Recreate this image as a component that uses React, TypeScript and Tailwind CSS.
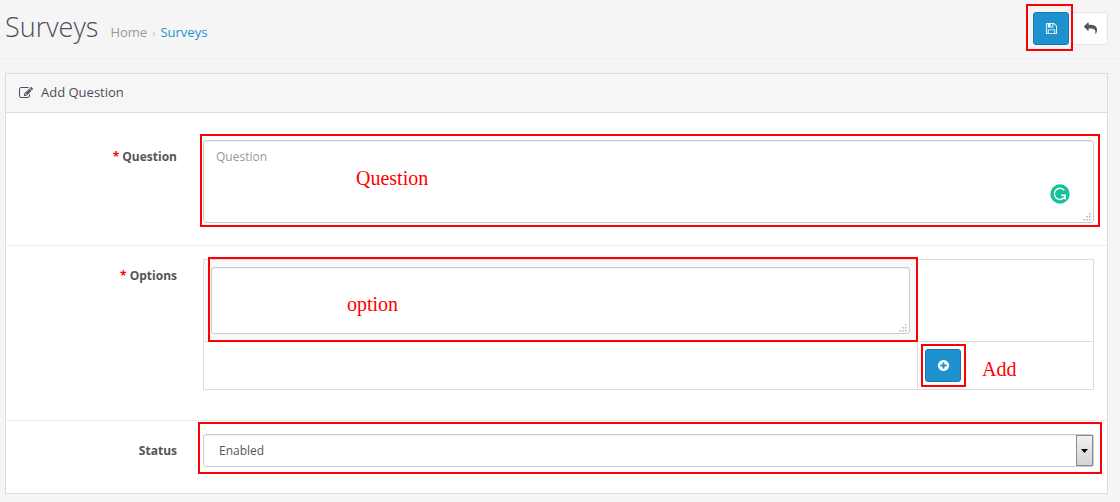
import { useState } from "react";

const icons = {
  edit: "M888 1184l116-116-152-152-116 116v56h96v96h56zm440-720q-16-16-33 1l-350 350q-17 17-1 33t33-1l350-350q17-17 1-33zm80 594v190q0 119-84.5 203.5t-203.5 84.5h-832q-119 0-203.5-84.5t-84.5-203.5v-832q0-119 84.5-203.5t203.5-84.5h832q63 0 117 25 15 7 18 23 3 17-9 29l-49 49q-14 14-32 8-23-6-45-6h-832q-66 0-113 47t-47 113v832q0 66 47 113t113 47h832q66 0 113-47t47-113v-126q0-13 9-22l64-64q15-15 35-7t20 29zm-96-738l288 288-672 672h-288v-288zm444 132l-92 92-288-288 92-92q28-28 68-28t68 28l152 152q28 28 28 68t-28 68z",
  save: "M512 1536h768v-384h-768v384zm896 0h128v-896q0-14-10-38.5t-20-34.5l-281-281q-10-10-34-20t-39-10v416q0 40-28 68t-68 28h-576q-40 0-68-28t-28-68v-416h-128v1280h128v-416q0-40 28-68t68-28h832q40 0 68 28t28 68v416zm-384-928v-320q0-13-9.5-22.5t-22.5-9.5h-192q-13 0-22.5 9.5t-9.5 22.5v320q0 13 9.5 22.5t22.5 9.5h192q13 0 22.5-9.5t9.5-22.5zm640 32v928q0 40-28 68t-68 28h-1344q-40 0-68-28t-28-68v-1344q0-40 28-68t68-28h928q40 0 88 20t76 48l280 280q28 28 48 76t20 88z",
  reply: "M1792 1120q0 166-127 451-3 7-10.5 24t-13.5 30-13 22q-12 17-28 17-15 0-23.5-10t-8.5-25q0-9 2.5-26.5t2.5-23.5q5-68 5-123 0-101-17.5-181t-48.5-138.5-80-101-105.5-69.5-133-42.5-154-21.5-175.5-6h-224v256q0 26-19 45t-45 19-45-19l-512-512q-19-19-19-45t19-45l512-512q19-19 45-19t45 19 19 45v256h224q713 0 875 403 53 134 53 333z",
  plus: "M1344 960v-128q0-26-19-45t-45-19h-256v-256q0-26-19-45t-45-19h-128q-26 0-45 19t-19 45v256h-256q-26 0-45 19t-19 45v128q0 26 19 45t45 19h256v256q0 26 19 45t45 19h128q26 0 45-19t19-45v-256h256q26 0 45-19t19-45zm320-64q0 209-103 385.5t-279.5 279.5-385.5 103-385.5-103-279.5-279.5-103-385.5 103-385.5 279.5-279.5 385.5-103 385.5 103 279.5 279.5 103 385.5z",
};

function Icon({ name, className }: { name: keyof typeof icons; className: string }) {
  return (
    <svg viewBox="0 0 1792 1792" fill="currentColor" className={className} aria-hidden="true">
      <path d={icons[name]} />
    </svg>
  );
}

// Red outline drawn over a control
function Outline({ className }: { className: string }) {
  return <div className={`pointer-events-none absolute border-2 border-[#ff0000] ${className}`} />;
}

function Note({ text, className }: { text: string; className: string }) {
  return (
    <span
      className={`pointer-events-none absolute font-['Liberation_Serif',serif] text-[20px] leading-6 text-[#ff0000] ${className}`}
    >
      {text}
    </span>
  );
}

function Grip() {
  return (
    <svg viewBox="0 0 8 8" fill="#b5b5b5" className="pointer-events-none absolute right-[3px] bottom-[2px] h-2 w-2" aria-hidden="true">
      <path d="M6 0h1.5v1.5H6zM3.3 3h1.5v1.5H3.3zM6 3h1.5v1.5H6zM.5 6H2v1.5H.5zM3.3 6h1.5v1.5H3.3zM6 6h1.5v1.5H6z" />
    </svg>
  );
}

function Required() {
  return <span className="text-[#f00]">* </span>;
}

const labelClass = "w-[183px] shrink-0 pr-3 pt-2 text-right text-[12px] leading-[18px] font-bold text-[#555]";
const fieldClass = "relative min-w-0 flex-1 pl-[14px] pr-[13px]";
const inputClass =
  "block w-full resize-none rounded-[3px] border border-[#ccc] bg-white px-3 py-2 text-[12px] leading-4 text-[#555] shadow-[inset_0_1px_1px_rgba(0,0,0,0.075)] outline-none placeholder:text-[#999]";
const primaryClass =
  "flex h-[33px] w-9 items-center justify-center rounded-[3px] border border-[#1978ab] bg-[#1e91cf] text-white";

export default function App() {
  const [question, setQuestion] = useState("");
  const [option, setOption] = useState("");
  const [status, setStatus] = useState("1");

  return (
    <main className="min-h-screen bg-[#f5f5f5] pb-2 font-['Open_Sans',sans-serif] text-[12px] text-[#666]">
      <header className="flex h-[59px] items-start justify-between border-b border-[#eee] pr-3 pl-[5px]">
        <div className="flex items-baseline pt-[7px]">
          <h1 className="text-[27px] leading-10 font-light text-[#4c4d5a]">Surveys</h1>
          <nav aria-label="Breadcrumb" className="ml-3 flex items-baseline text-[13px]">
            <a href="#" className="text-[#999]">
              Home
            </a>
            <span className="mx-[5px] text-[11px] text-[#bbb]">›</span>
            <a href="#" className="text-[#1e91cf]">
              Surveys
            </a>
          </nav>
        </div>

        <div className="flex gap-[3px] pt-3">
          <div className="relative">
            <button type="submit" form="form-question" aria-label="Save" className={primaryClass}>
              <Icon name="save" className="h-[13px] w-[13px]" />
            </button>
            <Outline className="-top-2 -right-1 -bottom-[6px] -left-[7px]" />
          </div>
          <button
            type="button"
            aria-label="Back"
            className="flex h-[33px] w-9 items-center justify-center rounded-[3px] border border-[#e4e4e4] bg-white text-[#555]"
          >
            <Icon name="reply" className="h-[13px] w-[13px]" />
          </button>
        </div>
      </header>

      <section className="mt-[14px] mr-3 ml-[5px] border border-[#dcdcdc] bg-white">
        <div className="flex h-[39px] items-center gap-2 border-b border-[#dcdcdc] bg-[#f6f6f6] pl-[13px] text-[#4c4d5a]">
          <Icon name="edit" className="h-[14px] w-[14px]" />
          <h2 className="text-[13px]">Add Question</h2>
        </div>

        <form id="form-question" onSubmit={(e) => e.preventDefault()}>
          {/* Question */}
          <div className="flex border-b border-[#ededed] pt-[27px] pb-[22px]">
            <label htmlFor="question" className={labelClass}>
              <Required />
              Question
            </label>
            <div className={fieldClass}>
              <div className="relative">
                <textarea
                  id="question"
                  placeholder="Question"
                  value={question}
                  onChange={(e) => setQuestion(e.target.value)}
                  className={`${inputClass} h-[83px]`}
                />
                <Grip />
                <svg viewBox="0 0 20 20" className="absolute right-6 bottom-[19px] h-5 w-5" aria-hidden="true">
                  <circle cx="10" cy="10" r="9.7" fill="#15c39a" />
                  <path
                    d="M14.4 6.4A5.6 5.6 0 1 0 15.4 11.2H11.2M15.2 11v4.6M12.9 14.4h2.4"
                    fill="none"
                    stroke="#fff"
                    strokeWidth="1.4"
                  />
                </svg>
                <Outline className="-top-[6px] -right-[6px] -bottom-1 -left-[3px]" />
                <Note text="Question" className="top-[26px] left-[153px]" />
              </div>
            </div>
          </div>

          {/* Options */}
          <div className="flex border-b border-[#ededed] pt-[13px] pb-[30px]">
            <label htmlFor="option" className={labelClass}>
              <Required />
              Options
            </label>
            <div className={fieldClass}>
              <table className="w-full table-fixed border-separate border-spacing-0 border-t border-l border-[#ddd]">
                <colgroup>
                  <col />
                  <col className="w-[176px]" />
                </colgroup>
                <tbody>
                  <tr>
                    <td className="border-r border-b border-[#ddd] bg-[#f9f9f9] p-[7px]">
                      <div className="relative">
                        <textarea
                          id="option"
                          value={option}
                          onChange={(e) => setOption(e.target.value)}
                          className={`${inputClass} h-[67px]`}
                        />
                        <Grip />
                        <Outline className="-top-[10px] -right-2 -bottom-2 -left-[3px]" />
                        <Note text="option" className="top-[25px] left-[136px]" />
                      </div>
                    </td>
                    <td className="border-r border-b border-[#ddd]" />
                  </tr>
                  <tr>
                    <td className="border-r border-b border-[#ddd]" />
                    <td className="border-r border-b border-[#ddd] p-[7px]">
                      <div className="relative w-9">
                        <button type="button" aria-label="Add option" className={primaryClass}>
                          <Icon name="plus" className="h-[13px] w-[13px]" />
                        </button>
                        <Outline className="-inset-y-[5px] -right-[5px] -left-1" />
                        <Note text="Add" className="top-2 left-[57px]" />
                      </div>
                    </td>
                  </tr>
                </tbody>
              </table>
            </div>
          </div>

          {/* Status */}
          <div className="flex pt-[13px] pb-[26px]">
            <label htmlFor="status" className={labelClass}>
              Status
            </label>
            <div className={fieldClass}>
              <div className="relative">
                <select
                  id="status"
                  value={status}
                  onChange={(e) => setStatus(e.target.value)}
                  className="block h-[33px] w-full appearance-none rounded-[3px] border border-[#ccc] bg-white pr-6 pl-[15px] text-[12px] text-[#555] shadow-[inset_0_1px_1px_rgba(0,0,0,0.075)] outline-none"
                >
                  <option value="1">Enabled</option>
                  <option value="0">Disabled</option>
                </select>
                <div className="pointer-events-none absolute top-px right-px bottom-px flex w-[17px] items-center justify-center border border-[#8a8a8a] bg-linear-to-b from-[#f0f0f0] to-[#d4d4d4]">
                  <svg viewBox="0 0 7 4" className="h-1 w-[7px]" aria-hidden="true">
                    <path d="M0 0h7L3.5 4z" />
                  </svg>
                </div>
                <Outline className="-top-3 -right-2 -bottom-[7px] -left-[5px]" />
              </div>
            </div>
          </div>
        </form>
      </section>
    </main>
  );
}
